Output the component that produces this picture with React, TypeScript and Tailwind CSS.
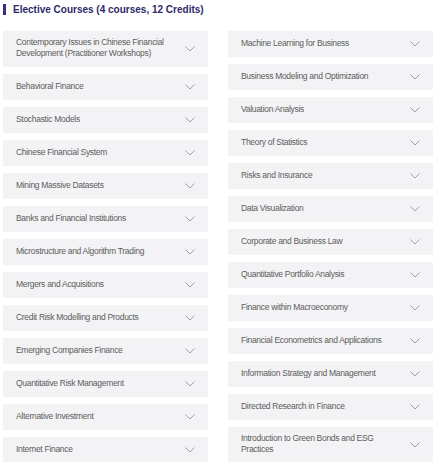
import React from 'react';

const leftCourses = [
  'Contemporary Issues in Chinese Financial Development (Practitioner Workshops)',
  'Behavioral Finance',
  'Stochastic Models',
  'Chinese Financial System',
  'Mining Massive Datasets',
  'Banks and Financial Institutions',
  'Microstructure and Algorithm Trading',
  'Mergers and Acquisitions',
  'Credit Risk Modelling and Products',
  'Emerging Companies Finance',
  'Quantitative Risk Management',
  'Alternative Investment',
  'Internet Finance',
];

const rightCourses = [
  'Machine Learning for Business',
  'Business Modeling and Optimization',
  'Valuation Analysis',
  'Theory of Statistics',
  'Risks and Insurance',
  'Data Visualization',
  'Corporate and Business Law',
  'Quantitative Portfolio Analysis',
  'Finance within Macroeconomy',
  'Financial Econometrics and Applications',
  'Information Strategy and Management',
  'Directed Research in Finance',
  'Introduction to Green Bonds and ESG Practices',
];

const Chevron = () => (
  <svg width="10" height="6" viewBox="0 0 10 6" className="shrink-0 mt-[2px]">
    <path d="M0.5 0.5 L5 5 L9.5 0.5" fill="none" stroke="#a0a0a6" strokeWidth="1" />
  </svg>
);

const CourseItem = ({ title }: { title: string }) => (
  <div className="flex items-center justify-between bg-[#f3f3f5] pl-[13px] pr-[13px] pt-[6px] pb-[8px] min-h-[26px]">
    <span className="text-[8.5px] leading-[11px] tracking-[-0.3px] text-[#5c5c5c] pr-5">{title}</span>
    <Chevron />
  </div>
);

export default function App() {
  return (
    <div className="w-[436px] h-[462px] overflow-hidden bg-white px-[3px] pt-[4px]" style={{ fontFamily: '"Liberation Sans", Arial, sans-serif' }}>
      <div className="flex items-center gap-[7px] h-[11px]">
        <div className="w-[3px] h-[11px] bg-[#3d2c7f]" />
        <h2 className="text-[10px] font-bold text-[#2d2a6b] leading-none">Elective Courses (4 courses, 12 Credits)</h2>
      </div>
      <div className="grid grid-cols-2 gap-x-[20px] mt-[16px] items-start">
        <div className="flex flex-col gap-[7px]">
          {leftCourses.map((c) => (
            <CourseItem key={c} title={c} />
          ))}
        </div>
        <div className="flex flex-col gap-[7px]">
          {rightCourses.map((c) => (
            <CourseItem key={c} title={c} />
          ))}
        </div>
      </div>
    </div>
  );
}
